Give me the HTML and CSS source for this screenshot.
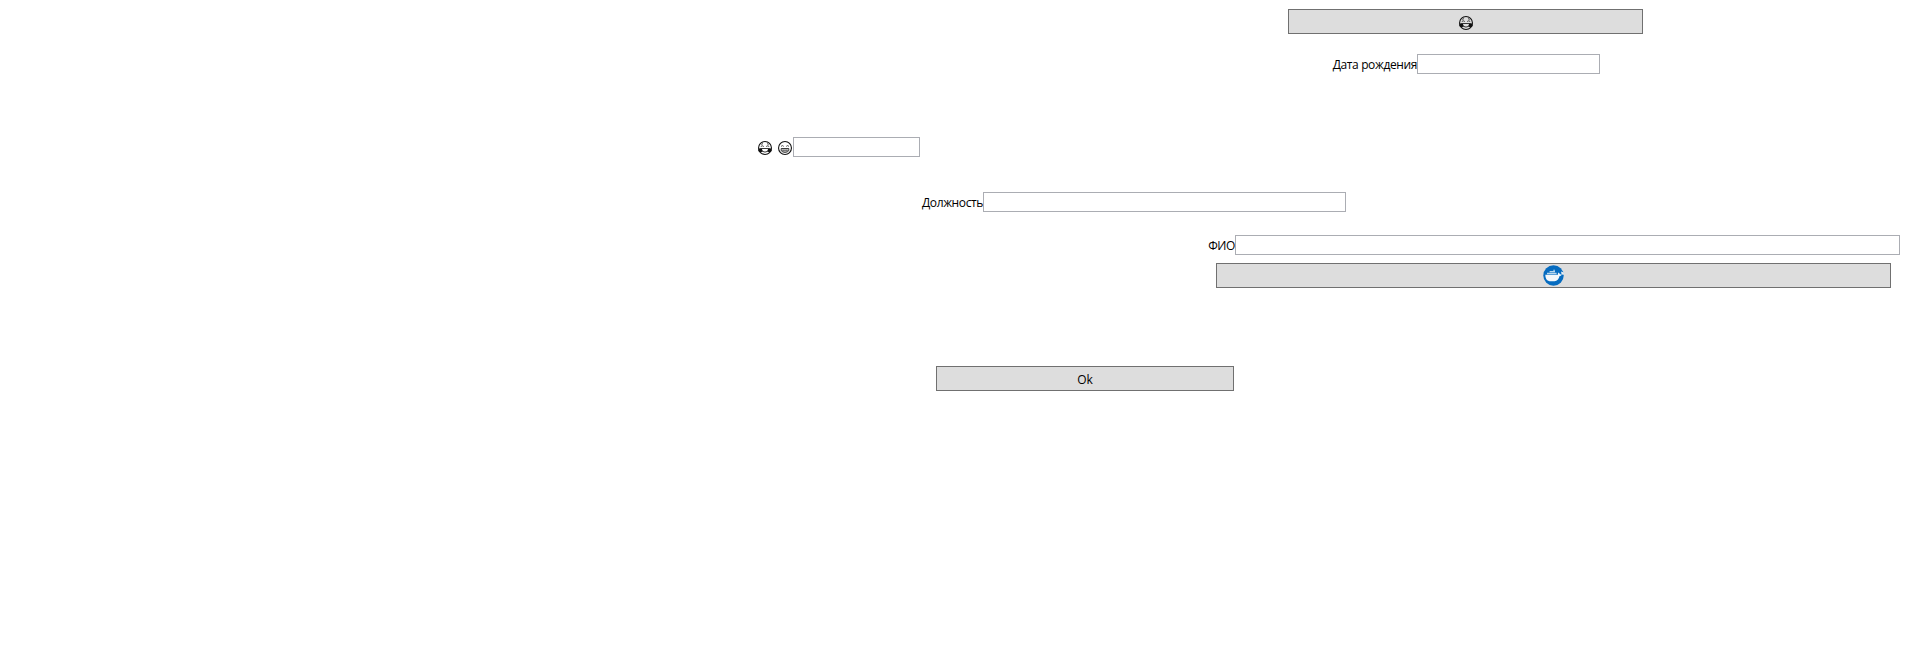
FILE: index.html
```html
<!DOCTYPE html>
<html lang="ru">
<head>
<meta charset="utf-8">
<title>Форма</title>
<link rel="stylesheet" href="styles.css">
</head>
<body>
<svg class="defs" width="0" height="0" aria-hidden="true">
  <symbol id="joy" viewBox="0 0 14 14">
    <circle cx="7" cy="7" r="6.45" fill="none" stroke="#111" stroke-width="1.1"/>
    <path d="M3.300 3.400L5 2.600M9 2.600L10.700 3.400M2.800 5.500Q4.300 4.100 5.800 5.500M11.200 5.500Q9.700 4.100 8.200 5.500" fill="none" stroke="#222" stroke-width=".85"/>
    <path d="M.2 8.900Q.5 7 3.700 7.100Q4 8.900 4.700 9.700Q3.800 11.300 2.200 11.200Q.4 10.800 .2 8.900ZM13.800 8.900Q13.500 7 10.300 7.100Q10 8.900 9.300 9.700Q10.200 11.300 11.800 11.200Q13.600 10.800 13.800 8.900Z" fill="#111"/>
    <path d="M3.700 7.500H10.300M4 10.200Q7 12 10 10.200" fill="none" stroke="#222" stroke-width=".9"/>
  </symbol>
  <symbol id="grin" viewBox="0 0 14 14">
    <circle cx="7" cy="7" r="6.45" fill="none" stroke="#111" stroke-width="1.1"/>
    <path d="M3 5.400Q4.400 3.800 5.800 5.400M8.200 5.400Q9.600 3.800 11 5.400" fill="none" stroke="#333" stroke-width=".85"/>
    <path d="M3.200 7.500H10.800V9.300Q10.200 11.400 7 11.400Q3.800 11.400 3.200 9.300Z" fill="#eee" stroke="#222" stroke-width=".9"/>
    <path d="M3.300 9.400H10.700M5.100 7.500V11M7 7.500V11M8.900 7.500V11" stroke="#444" stroke-width=".6"/>
  </symbol>
</svg>
<main class="form">
  <button class="button button-top" aria-label="joy"><svg class="emoji"><use href="#joy"/></svg></button>
  <div class="row row-birth"><label class="label">Дата рождения</label><input class="field field-birth"></div>
  <div class="row row-emoji"><label class="label emojis"><svg class="emoji"><use href="#joy"/></svg><svg class="emoji"><use href="#grin"/></svg></label><input class="field field-emoji"></div>
  <div class="row row-post"><label class="label">Должность</label><input class="field field-post"></div>
  <div class="row row-name"><label class="label">ФИО</label><input class="field field-name"></div>
  <button class="button button-docker" aria-label="Docker">
    <svg class="docker" viewBox="0 0 21 21">
      <circle cx="10.500" cy="10.500" r="10.200" fill="#066cc0"/>
      <path d="M2.300 9.800H15Q14.600 8.500 15.400 7.400Q16.600 8 16.900 9.200L18.800 9.400Q18.200 10.900 16.600 11Q15.400 16 11.500 16.200H6.500Q2.300 15.700 2.300 9.800Z" fill="#f4f8fb"/>
      <path d="M18 6.400L20.900 7.600V9.800L18.600 9.500Z" fill="#e8eef3"/>
      <path d="M4 9.200V7.700H13.600V9.200ZM6.600 7.300V6.100H12V7.300ZM10.200 5.700V4.700H12V5.700Z" fill="#b8d8ee"/>
    </svg>
  </button>
  <button class="button button-ok"><span>Ok</span></button>
</main>
</body>
</html>
```
FILE: styles.css
```css
* { box-sizing: border-box; }
body {
  margin: 0;
  background: #fff;
  color: #000;
  font: 12px/16px "Open Sans", "Noto Sans", sans-serif;
}
.defs { display: block; height: 0; }
.form {
  display: flex;
  flex-direction: column;
  align-items: flex-start;
  height: 665px;
  padding-top: 9px;
  overflow: hidden;
}
.row { display: flex; height: 20px; }
.label {
  display: flex;
  justify-content: flex-end;
  width: 100px;
  padding-top: 3px;
  letter-spacing: -0.38px;
  white-space: nowrap;
}
.field {
  height: 20px;
  padding: 0 2px;
  border: 1px solid #abadb3;
  border-radius: 0;
  background: #fff;
  font: inherit;
}
.button {
  display: flex;
  align-items: center;
  justify-content: center;
  height: 25px;
  padding: 0;
  border: 1px solid #707070;
  border-radius: 0;
  background: #ddd;
  color: #000;
  font: inherit;
}
.emoji { display: block; flex: none; width: 14px; height: 14px; }
.emojis { gap: 6px; padding: 4px 1px 0 0; }
.button-top { width: 355px; margin-left: 1288px; }
.button-top .emoji { margin-top: 2px; }
.row-birth { margin: 20px 0 0 1317px; }
.field-birth { width: 183px; }
.row-emoji { margin: 63px 0 0 693px; }
.field-emoji { width: 127px; }
.row-post { margin: 35px 0 0 883px; }
.field-post { width: 363px; }
.row-name { margin: 23px 0 0 1135px; }
.field-name { width: 665px; }
.button-docker { width: 675px; margin: 8px 0 0 1216px; }
.docker { display: block; width: 21px; height: 21px; }
.button-ok { width: 298px; margin: 78px 0 0 936px; }
.button-ok span { padding-top: 2px; }
```
